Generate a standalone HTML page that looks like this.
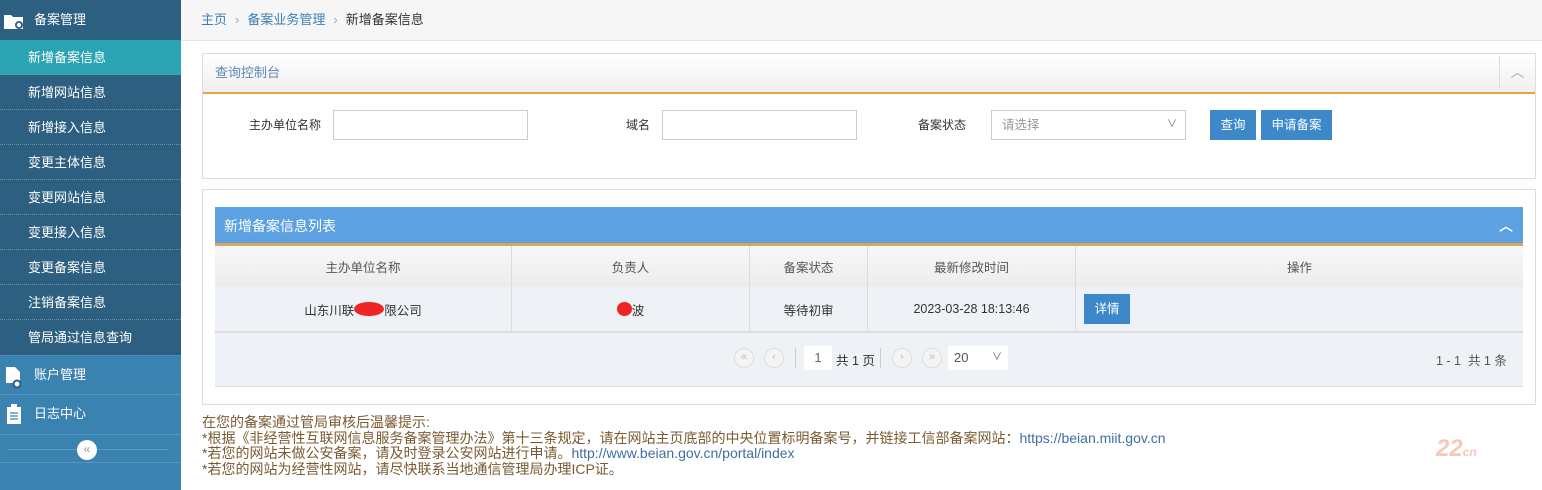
<!DOCTYPE html>
<html><head><meta charset="utf-8"><style>
*{margin:0;padding:0;box-sizing:border-box}
body{width:1542px;height:490px;overflow:hidden;background:#fff;font-family:"Liberation Sans","Noto Sans CJK SC",sans-serif;font-size:13px;color:#333;position:relative}
.a{position:absolute}
#side{left:0;top:0;width:181px;height:490px;background:#3a82b0}
.sh{left:0;width:181px;color:#fff;font-size:13px}
.it{left:0;width:181px;height:35px;line-height:35px;padding-left:28px;color:#fff;font-size:13px;background:#2c5f80;border-bottom:1px dotted #6a94b2}
.it.on{background:#2aa3b3}
.tl{left:11px;top:40px;height:315px;border-left:1px dotted #7aa3bf}
.cell{position:absolute;text-align:center;top:0;height:100%;display:flex;align-items:center;justify-content:center;border-right:1px solid #dcdcdc;font-size:12.5px}
input.f{position:absolute;height:30px;border:1px solid #ccc;background:#fff}
.btn{position:absolute;background:#3d88c8;color:#fff;text-align:center;line-height:30px;height:30px;font-size:12.5px}
.pb{position:absolute;top:348px;width:20px;height:20px;border:1px solid #ddd;border-radius:50%;background:#f4f4f4;color:#bbb;font-size:11px;text-align:center;line-height:17px}
.lb{position:absolute;font-size:12px;line-height:30px;top:56px}
</style></head><body>
<div id="side" class="a">
 <div class="a sh" style="top:0;height:40px;background:#2c5f80;line-height:40px"><span style="position:absolute;left:34px">备案管理</span>
  <svg class="a" style="left:4px;top:12px" width="20" height="18"><path d="M0 3h7l2 2h10v12H0z" fill="#fff"/><circle cx="15" cy="13" r="4" fill="#2c5f80"/><circle cx="15" cy="13" r="2.2" fill="#fff"/></svg></div>
 <div class="a tl"></div>
 <div class="a it on" style="top:40px">新增备案信息</div>
 <div class="a it" style="top:75px">新增网站信息</div>
 <div class="a it" style="top:110px">新增接入信息</div>
 <div class="a it" style="top:145px">变更主体信息</div>
 <div class="a it" style="top:180px">变更网站信息</div>
 <div class="a it" style="top:215px">变更接入信息</div>
 <div class="a it" style="top:250px">变更备案信息</div>
 <div class="a it" style="top:285px">注销备案信息</div>
 <div class="a it" style="top:320px;border-bottom:none">管局通过信息查询</div>
 <div class="a sh" style="top:355px;height:40px;line-height:38px;border-bottom:1px solid #5495bf;border-top:1px solid #4a8cb8"><span style="position:absolute;left:34px">账户管理</span>
  <svg class="a" style="left:6px;top:11px" width="16" height="22"><path d="M0 0h9l5 5v11H0z" fill="#fff"/><circle cx="11" cy="17" r="4.5" fill="#2c5f80"/><circle cx="11" cy="17" r="2.5" fill="#fff"/></svg></div>
 <div class="a sh" style="top:395px;height:40px;line-height:38px;border-bottom:1px solid #5495bf"><span style="position:absolute;left:34px">日志中心</span>
  <svg class="a" style="left:7px;top:9px" width="14" height="20"><rect x="0" y="3" width="14" height="17" fill="#fff"/><rect x="4" y="0" width="6" height="4" fill="#fff"/><path d="M3 9h8M3 12h8M3 15h8" stroke="#3a82b0" stroke-width="1.2"/></svg></div>
 <div class="a" style="left:8px;top:449px;width:160px;border-top:1px solid #5a9ac4"></div>
 <div class="a" style="left:77px;top:440px;width:20px;height:20px;border-radius:50%;background:#fff;color:#999;font-size:12px;text-align:center;line-height:19px">«</div>
 <div class="a" style="left:0;top:462px;width:181px;border-top:1px solid #5495bf"></div>
</div>
<div class="a" style="left:181px;top:0;width:1361px;height:41px;background:#f6f6f6;border-bottom:1px solid #e4e4e4;line-height:40px;padding-left:20px;font-size:13px">
 <span style="color:#3d7fb5">主页</span><span style="color:#aaa;margin:0 8px">›</span><span style="color:#3d7fb5">备案业务管理</span><span style="color:#aaa;margin:0 8px">›</span><span>新增备案信息</span></div>
<div class="a" style="left:202px;top:53px;width:1334px;height:126px;border:1px solid #ddd">
 <div class="a" style="left:0;top:0;width:1332px;height:40px;background:linear-gradient(#fff,#efefef);border-bottom:2px solid #e8a33c;line-height:38px;padding-left:12px;color:#5b89b5">查询控制台
  <div class="a" style="right:0;top:2px;width:36px;height:32px;border-left:1px solid #ddd;color:#aaa;text-align:center;line-height:32px;font-size:14px">︿</div></div>
 <span class="lb" style="left:46px">主办单位名称</span>
 <input class="f" style="left:130px;top:56px;width:195px">
 <span class="lb" style="left:423px">域名</span>
 <input class="f" style="left:459px;top:56px;width:195px">
 <span class="lb" style="left:715px">备案状态</span>
 <div class="a" style="left:788px;top:56px;width:195px;height:30px;border:1px solid #ccc;color:#999;line-height:28px;padding-left:10px;font-size:12.5px">请选择<span style="position:absolute;right:8px;color:#666;font-size:10px">∨</span></div>
 <div class="btn" style="left:1007px;top:56px;width:46px">查询</div>
 <div class="btn" style="left:1058px;top:56px;width:71px">申请备案</div>
</div>
<div class="a" style="left:202px;top:189px;width:1334px;height:216px;border:1px solid #ddd"></div>
<div class="a" style="left:215px;top:207px;width:1308px;height:39px;background:#5ca2e2;border-bottom:3px solid #d9a55c;color:#fff;line-height:38px;padding-left:9px;font-size:14px">新增备案信息列表<span style="position:absolute;right:10px;top:0;font-size:14px;font-weight:bold">︿</span></div>
<div class="a" style="left:215px;top:246px;width:1308px;height:41px;background:linear-gradient(#f8f8f8,#ececec);color:#555">
 <div class="cell" style="left:0;width:297px">主办单位名称</div><div class="cell" style="left:297px;width:238px">负责人</div><div class="cell" style="left:535px;width:118px">备案状态</div><div class="cell" style="left:653px;width:208px">最新修改时间</div><div class="cell" style="left:861px;width:447px;border:none">操作</div></div>
<div class="a" style="left:215px;top:287px;width:1308px;height:46px;background:#eef2f6;border-bottom:2px solid #ddd;color:#333">
 <div class="cell" style="left:0;width:297px">山东川联<span style="display:inline-block;width:30px;height:14px;background:#f02424;border-radius:50%"></span>限公司</div>
 <div class="cell" style="left:297px;width:238px"><span style="display:inline-block;width:15px;height:14px;background:#f02424;border-radius:50%"></span>波</div>
 <div class="cell" style="left:535px;width:118px">等待初审</div><div class="cell" style="left:653px;width:208px">2023-03-28 18:13:46</div>
 <div class="btn" style="left:869px;top:7px;width:46px">详情</div></div>
<div class="a" style="left:215px;top:333px;width:1308px;height:54px;background:#eef1f6;border-bottom:1px solid #ddd"></div>
<div class="pb" style="left:734px">«</div><div class="pb" style="left:764px">‹</div>
<div class="a" style="left:795px;top:348px;height:20px;border-left:1px solid #ccc"></div>
<div class="a" style="left:804px;top:346px;width:28px;height:24px;background:#fff;text-align:center;line-height:24px;color:#666">1</div>
<span class="a" style="left:836px;top:350px;font-size:12.5px">共 1 页</span>
<div class="a" style="left:880px;top:348px;height:20px;border-left:1px solid #ccc"></div>
<div class="pb" style="left:892px">›</div><div class="pb" style="left:922px">»</div>
<div class="a" style="left:948px;top:346px;width:60px;height:24px;background:#fff;line-height:24px;padding-left:6px;color:#555">20<span style="position:absolute;right:6px;font-size:10px">∨</span></div>
<span class="a" style="left:1436px;top:350px;color:#555;font-size:12.5px">1 - 1 &nbsp;共 1 条</span>
<div class="a" style="left:202px;top:415px;font-size:14px;line-height:15.5px;color:#7a5a30;white-space:nowrap">在您的备案通过管局审核后温馨提示:<br>*根据《非经营性互联网信息服务备案管理办法》第十三条规定，请在网站主页底部的中央位置标明备案号，并链接工信部备案网站：<span style="color:#3d6fa5">https://beian.miit.gov.cn</span><br>*若您的网站未做公安备案，请及时登录公安网站进行申请。<span style="color:#3d6fa5">http://www.beian.gov.cn/portal/index</span><br>*若您的网站为经营性网站，请尽快联系当地通信管理局办理ICP证。</div>
<div class="a" style="left:1436px;top:435px;color:#f5c8b8;font-size:24px;font-weight:bold;font-style:italic">22<span style="font-size:12px">cn</span></div>
</body></html>
